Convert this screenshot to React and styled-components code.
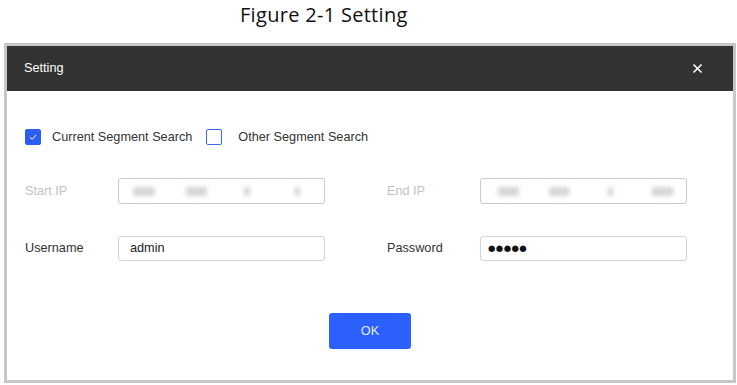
import React from "react";
import styled, { createGlobalStyle } from "styled-components";

const Global = createGlobalStyle`
  html, body { margin: 0; padding: 0; background: #fff; }
  body { font-family: "Liberation Sans", Arial, sans-serif; }
  * { box-sizing: border-box; }
`;

const Page = styled.div`
  width: 737px;
  height: 385px;
  background: #fff;
  overflow: hidden;
`;

const Caption = styled.div`
  height: 43px;
  padding-left: 240px;
  padding-top: 2px;
  font-family: "Open Sans", "Noto Sans", sans-serif;
  font-size: 20px;
  line-height: 26px;
  color: #111;
  letter-spacing: 0.3px;
`;

const Frame = styled.div`
  margin-left: 4px;
  width: 732px;
  height: 340px;
  border: 3px solid #c7c7c7;
  display: flex;
  flex-direction: column;
`;

const Header = styled.div`
  height: 45px;
  flex: none;
  background: #333333;
  display: flex;
  align-items: center;
  justify-content: space-between;
  padding: 0 30px 0 17px;
  color: #fff;
  font-size: 12.7px;
`;

const Title = styled.span`
  margin-top: -1px;
`;

const Body = styled.div`
  flex: 1;
  background: #fff;
  padding: 38px 0 0 18px;
  display: flex;
  flex-direction: column;
`;

const CheckRow = styled.div`
  display: flex;
  align-items: center;
  height: 16px;
  font-size: 12.7px;
  color: #333;
`;

const Box = styled.span`
  width: 16px;
  height: 16px;
  border-radius: 2px;
  flex: none;
  display: flex;
  align-items: center;
  justify-content: center;
  background: ${(p) => (p.$on ? "#2d5ef3" : "#fff")};
  border: 1px solid ${(p) => (p.$on ? "#2d5ef3" : "#3a66f0")};
  margin-right: ${(p) => (p.$on ? "11px" : "16px")};
`;

const CheckText = styled.span`
  margin-right: 14px;
`;

const Grid = styled.div`
  margin-top: 33px;
  display: grid;
  grid-template-columns: 93px 207px 62px 93px 207px;
  grid-auto-rows: 26px;
  row-gap: 31px;
  align-items: center;
`;

const Label = styled.span`
  font-size: 12.7px;
  color: ${(p) => (p.$disabled ? "#c2c2c2" : "#333")};
`;

const Field = styled.div`
  height: ${(p) => (p.$disabled ? "26px" : "25px")};
  border: 1px solid ${(p) => (p.$disabled ? "#c9c9c9" : "#d4d4d4")};
  border-radius: 3px;
  background: #fff;
  display: flex;
  align-items: center;
  padding-left: 11px;
  font-size: 12.7px;
  color: #222;
  position: relative;
`;

const Blur = styled.span`
  position: absolute;
  top: 8px;
  height: 9px;
  background: #c8c8c8;
  filter: blur(2px);
  opacity: 0.75;
`;

const Dots = styled.span`
  font-family: "DejaVu Sans", sans-serif;
  font-size: 8.5px;
  letter-spacing: 0.4px;
  color: #111;
  margin-left: -4px;
`;

const Footer = styled.div`
  margin-top: 52px;
  display: flex;
  justify-content: center;
  padding-right: 18px;
`;

const OkButton = styled.button`
  width: 82px;
  height: 36px;
  border: none;
  border-radius: 3px;
  background: #2b5ffe;
  color: #e8eeff;
  font-family: "Liberation Sans", Arial, sans-serif;
  font-size: 12.7px;
  padding: 0;
`;

const Check = () => (
  <svg width="10" height="10" viewBox="0 0 10 10">
    <path d="M2 5.2 L4.2 7.3 L8 3" fill="none" stroke="#fff" strokeWidth="1" />
  </svg>
);

const Close = () => (
  <svg width="11" height="11" viewBox="0 0 11 11">
    <path d="M1.5 1.5 L9.5 9.5 M9.5 1.5 L1.5 9.5" stroke="#fff" strokeWidth="1.6" />
  </svg>
);

const blurStart = [
  [14, 22],
  [67, 21],
  [125, 6],
  [176, 5],
];
const blurEnd = [
  [17, 21],
  [68, 20],
  [127, 5],
  [171, 21],
];

export default function App() {
  return (
    <Page>
      <Global />
      <Caption>Figure 2-1 Setting</Caption>
      <Frame>
        <Header>
          <Title>Setting</Title>
          <Close />
        </Header>
        <Body>
          <CheckRow>
            <Box $on>
              <Check />
            </Box>
            <CheckText>Current Segment Search</CheckText>
            <Box />
            <CheckText>Other Segment Search</CheckText>
          </CheckRow>
          <Grid>
            <Label $disabled>Start IP</Label>
            <Field $disabled>
              {blurStart.map(([l, w], i) => (
                <Blur key={i} style={{ left: l, width: w }} />
              ))}
            </Field>
            <span />
            <Label $disabled>End IP</Label>
            <Field $disabled>
              {blurEnd.map(([l, w], i) => (
                <Blur key={i} style={{ left: l, width: w }} />
              ))}
            </Field>
            <Label>Username</Label>
            <Field>admin</Field>
            <span />
            <Label>Password</Label>
            <Field>
              <Dots>●●●●●</Dots>
            </Field>
          </Grid>
          <Footer>
            <OkButton>OK</OkButton>
          </Footer>
        </Body>
      </Frame>
    </Page>
  );
}
